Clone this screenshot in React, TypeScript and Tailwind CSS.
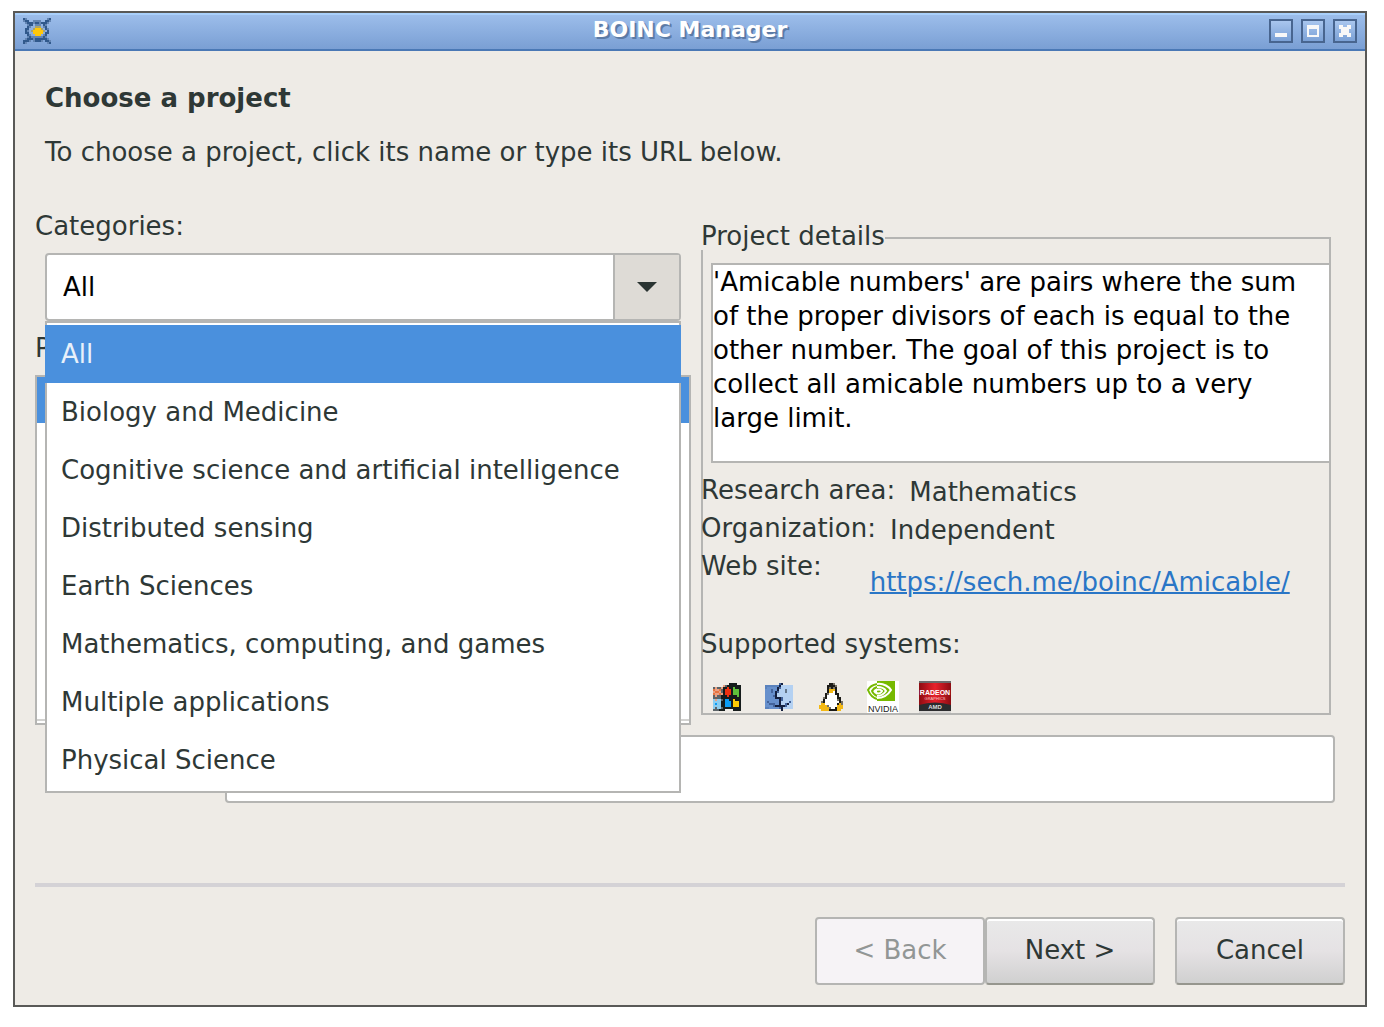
import { useState } from "react";

const CATEGORIES = [
  "All",
  "Biology and Medicine",
  "Cognitive science and artificial intelligence",
  "Distributed sensing",
  "Earth Sciences",
  "Mathematics, computing, and games",
  "Multiple applications",
  "Physical Science",
];

const DESCRIPTION =
  "'Amicable numbers' are pairs where the sum of the proper divisors of each is equal to the other number. The goal of this project is to collect all amicable numbers up to a very large limit.";

type Sprite = { rows: string[]; colors: Record<string, string> };

const BOINC: Sprite = {
  colors: { n: "#31598c", a: "#6486b4", s: "#a9a36b", y: "#ffc70a" },
  rows: [
    "na..........an",
    "ann..aaaa..nna",
    ".annnannannna.",
    "..ann.aaa.na..",
    "..na..sss.an..",
    ".nn..syyys.na.",
    ".na.syyyyys.n.",
    ".nn..yyyyy.nn.",
    "..na..yyy.an..",
    "..anaaaaaana..",
    ".annnannnnnna.",
    "nnna.annna.nna",
    "na..........an",
  ],
};

const WINDOWS: Sprite = {
  colors: { k: "#161c1c", t: "#e9a184", o: "#e8743f", d: "#5c6468", r: "#ee3010", g: "#5fc13a", b: "#0a9cf5", l: "#8ccdf0", y: "#ffcb05" },
  rows: [
    "........kkkk..",
    ".....tdkkkkkkk",
    "dtddtkkrkkgkkk",
    "ottodkrrrkgggk",
    "tootdkrrrkgggk",
    "ottotkrrrkgggk",
    "dtddkkkrkkkkgk",
    "ddddkkkkkkkkkk",
    "ltlldkbbkkykkk",
    "llllkkbbbkyyyk",
    "lbllkkbbbkyyyk",
    "llllkkbbbkyyyk",
    "ldlldkkkkkkkkk",
    "dddkkk....kkkk",
  ],
};

const MAC: Sprite = {
  colors: { B: "#6790cc", b: "#5a82bd", k: "#14203f", n: "#43639b", L: "#b4d1f2", d: "#63768a" },
  rows: [
    ".......nk.....",
    "bbbbbbbkLLLLLL",
    "bBBBBBknLLLLLL",
    "BBBnBBkLLLdLLL",
    "BBBnBknLLLdLLL",
    "BBBBBkLLLLLLLL",
    "BBBBnkLLLLLLLL",
    "BBBBBkkknLLLLL",
    "BBBBBBBknLLLLL",
    "BnBBBBBkLLLLnL",
    "BBnnnBBkLLnkLL",
    "BBBBnkkkkknLLL",
    "bbBBBBBnkLLLLL",
    "........k.....",
  ],
};

const TUX: Sprite = {
  colors: { k: "#1b1a17", w: "#ffffff", y: "#f3b814", d: "#777266" },
  rows: [
    ".....kkd....",
    "....kkkkd...",
    "....kdkdk...",
    "....kyyyk...",
    "....kyywk...",
    "...kdwwwkk..",
    "...kwwwwwk..",
    "..dkwwwwwkk.",
    "..kwwwwwwdk.",
    ".dkwwwwwwwkd",
    ".yywwwwwwkyd",
    "yyyydwwwwyyy",
    "yyyyydwwkyyy",
    ".yyyykkkkyy.",
  ],
};

function PixelIcon({ sprite, className }: { sprite: Sprite; className: string }) {
  const cols = sprite.rows[0].length;
  return (
    <svg viewBox={`0 0 ${cols} ${sprite.rows.length}`} className={className} shapeRendering="crispEdges" aria-hidden="true">
      {sprite.rows.map((row, y) =>
        row.split("").map((c, x) =>
          c === "." ? null : <rect key={`${x}-${y}`} x={x} y={y} width="1" height="1" fill={sprite.colors[c]} />
        )
      )}
    </svg>
  );
}

function NvidiaIcon() {
  return (
    <svg viewBox="0 0 32 32" className="size-8" aria-hidden="true">
      <rect width="32" height="32" fill="#fff" />
      <path d="M10 0h18v20H10z" fill="#76b900" />
      <g fill="none" strokeWidth="2">
        <path d="M10 3C5 4 2 7 1 9c2 5 5 8 9 9" stroke="#76b900" />
        <path d="M10 3c7-1 12 3 14 6-3 5-8 8-14 8" stroke="#fff" />
        <path d="M10 6c-3 1-4 2-5 4 1 3 3 4 5 5" stroke="#76b900" />
        <path d="M10 6c5 0 8 2 9 4-2 3-5 5-9 5" stroke="#fff" />
        <path d="M10 9c2-1 4 0 5 1-1 2-3 3-5 2" stroke="#fff" />
      </g>
      <text x="16" y="31" fontFamily="Liberation Sans" fontSize="9" fill="#222" textAnchor="middle">NVIDIA</text>
    </svg>
  );
}

function RadeonIcon() {
  return (
    <svg viewBox="0 0 32 32" className="size-8" aria-hidden="true">
      <defs>
        <linearGradient id="radeon" x1="0" x2="1" y1="0" y2="0">
          <stop offset="0" stopColor="#8d0c12" />
          <stop offset="0.5" stopColor="#e8212b" />
          <stop offset="1" stopColor="#8d0c12" />
        </linearGradient>
      </defs>
      <rect width="32" height="32" fill="#d9d7d5" />
      <rect width="32" height="2" fill="#6d6a6a" />
      <rect y="2" width="32" height="22" fill="url(#radeon)" />
      <path d="M0 24q16-5 32 0v6H0z" fill="#2b2b2d" />
      <text x="16" y="14" fontFamily="Liberation Sans" fontSize="7" fontWeight="bold" fill="#fff" textAnchor="middle">RADEON</text>
      <text x="16" y="19" fontFamily="Liberation Sans" fontSize="4" fill="#f6c4c4" textAnchor="middle">GRAPHICS</text>
      <text x="16" y="28" fontFamily="Liberation Sans" fontSize="6" fontWeight="bold" fill="#ddd" textAnchor="middle">AMD</text>
    </svg>
  );
}

const titleButton =
  "size-6 border-2 border-[#48658f] bg-linear-to-b from-[#a9c6ee] to-[#7ba1d6] flex items-center justify-center";

function TitleBar() {
  return (
    <header className="grid h-[38px] grid-cols-[1fr_auto_1fr] items-center border-t-2 border-b-2 border-t-[#a9d0fb] border-b-[#4a78b5] bg-linear-to-b from-[#9cbdea] to-[#7a9fd4] px-2 pb-0.5">
      <PixelIcon sprite={BOINC} className="h-[26px] w-7" />
      <h1 className="pb-0.5 text-[22px] leading-7 font-bold text-white [text-shadow:2px_2px_0_#5c7ba6]">BOINC Manager</h1>
      <div className="flex justify-end gap-2">
        <button type="button" aria-label="Minimize" className={titleButton}>
          <svg viewBox="0 0 20 20" className="size-5" fill="#f8f8f8">
            <rect x="4" y="12" width="12" height="4" />
          </svg>
        </button>
        <button type="button" aria-label="Maximize" className={titleButton}>
          <svg viewBox="0 0 20 20" className="size-5" fill="#f8f8f8">
            <path fillRule="evenodd" d="M4 4h12v12H4zM6 8v6h8V8z" />
          </svg>
        </button>
        <button type="button" aria-label="Close" className={titleButton}>
          <svg viewBox="0 0 20 20" className="size-5" fill="#f8f8f8">
            <path d="M4 4h4v2h4V4h4v4h-2v4h2v4h-4v-2H8v2H4v-4h2V8H4z" />
          </svg>
        </button>
      </div>
    </header>
  );
}

function CategorySelect() {
  const [category, setCategory] = useState("All");

  return (
    <div className="relative mx-2.5 mt-[11px]">
      <select
        id="categories"
        value={category}
        onChange={(e) => setCategory(e.target.value)}
        className="block h-[68px] w-full appearance-none rounded border-2 border-[#b5b5b3] bg-white pl-4 text-black outline-none"
      >
        {CATEGORIES.map((c) => (
          <option key={c}>{c}</option>
        ))}
      </select>
      <span className="pointer-events-none absolute inset-y-0.5 right-0.5 flex w-[66px] items-center justify-center border-l-2 border-[#b5b5b3] bg-[#dedbd6]">
        <svg viewBox="0 0 20 10" className="h-2.5 w-5" fill="#2a3432">
          <path d="M0 0h20L10 10z" />
        </svg>
      </span>

      {/* Open list */}
      <ul role="listbox" aria-label="Categories" className="absolute inset-x-0 top-full z-10 border-2 border-[#b5b5b3] bg-white py-0.5">
        {CATEGORIES.map((c) => (
          <li
            key={c}
            role="option"
            aria-selected={c === category}
            onClick={() => setCategory(c)}
            className="-mx-0.5 border-x-2 border-[#b5b5b3] pl-3.5 leading-[58px] whitespace-nowrap aria-selected:border-[#4a90dd] aria-selected:bg-[#4a90dd] aria-selected:text-[#e8f0fa]"
          >
            {c}
          </li>
        ))}
      </ul>
    </div>
  );
}

function ProjectDetails() {
  return (
    <fieldset className="mt-4 min-w-0 self-start border-2 border-[#b5b5b3]">
      <legend className="-ml-0.5 bg-[#eeebe6] pb-1 leading-5">Project details</legend>
      <div className="-ml-0.5">
        <div className="mt-[13px] pl-2.5">
          <textarea
            readOnly
            aria-label="Project description"
            value={DESCRIPTION}
            className="block h-[200px] w-full resize-none overflow-hidden border-2 border-r-0 border-[#b5b5b3] bg-white pr-5 leading-[34px] text-black outline-none"
          />
        </div>
        <dl className="mt-2 leading-[38px]">
          <div className="flex h-[38px] gap-3.5">
            <dt>Research area:</dt>
            <dd className="mt-0.5">Mathematics</dd>
          </div>
          <div className="flex h-[38px] gap-3.5">
            <dt>Organization:</dt>
            <dd className="mt-0.5">Independent</dd>
          </div>
          <div className="flex h-[78px] gap-12">
            <dt>Web site:</dt>
            <dd className="mt-4">
              <a href="https://sech.me/boinc/Amicable/" className="text-[#2a76c6] underline decoration-2">
                https://sech.me/boinc/Amicable/
              </a>
            </dd>
          </div>
          <dt>Supported systems:</dt>
          <dd className="mt-[18px] flex gap-5 pl-2.5">
            <span className="flex size-8 items-center justify-center">
              <PixelIcon sprite={WINDOWS} className="size-7" />
            </span>
            <span className="flex size-8 items-center justify-center">
              <PixelIcon sprite={MAC} className="size-7" />
            </span>
            <span className="flex size-8 items-center justify-center">
              <PixelIcon sprite={TUX} className="h-7 w-6" />
            </span>
            <NvidiaIcon />
            <RadeonIcon />
          </dd>
        </dl>
      </div>
    </fieldset>
  );
}

const wizardButton =
  "h-[68px] w-[170px] rounded border-2 border-[#b5b5b3] border-b-[#96968e] bg-linear-to-b from-[#e9e9e9] via-[#e5e2e4] to-[#d0d0d0] pb-0.5 shadow-[inset_0_2px_0_#fff]";

export default function App() {
  return (
    <div className="min-h-screen bg-white pt-[11px] pr-[17px] pb-5 pl-[13px] font-['DejaVu_Sans',sans-serif] text-[26px] leading-8 text-[#2e3836]">
      <div className="border-2 border-[#595957] bg-[#eeebe6]">
        <TitleBar />

        <main className="px-5 pt-[31px] pb-5">
          <div className="pl-2.5">
            <h2 className="font-bold">Choose a project</h2>
            <p className="mt-[22px]">To choose a project, click its name or type its URL below.</p>
          </div>

          <div className="mt-[42px] grid grid-cols-[656fr_630fr] gap-2.5 pr-3.5">
            <div>
              <label htmlFor="categories" className="block">Categories:</label>
              <CategorySelect />
              <p id="projects" className="mt-[11px]">Projects:</p>
              <div className="mt-[11px] h-[350px] border-2 border-[#b5b5b3] bg-white">
                <ul role="listbox" aria-labelledby="projects" className="h-[344px] border-b-2 border-[#d2d2d0]">
                  <li role="option" aria-selected="true" className="h-[46px] bg-[#4a90dd]" />
                </ul>
              </div>
            </div>
            <ProjectDetails />
          </div>

          {/* Project URL */}
          <div className="mt-2.5 flex pr-2.5 pl-[190px]">
            <input
              type="text"
              aria-label="Project URL"
              className="h-[68px] min-w-0 flex-1 rounded border-2 border-[#b5b5b3] bg-white px-4 outline-none"
            />
          </div>

          <hr className="mt-20 border-t-4 border-[#d4d2d6]" />

          <div className="mt-[30px] flex justify-end">
            <button type="button" disabled className="h-[68px] w-[170px] rounded border-2 border-[#b5b5b3] bg-[#f6f3f6] pb-0.5 text-[#929695]">
              &lt; Back
            </button>
            <button type="button" className={wizardButton}>Next &gt;</button>
            <button type="button" className={`${wizardButton} ml-5`}>Cancel</button>
          </div>
        </main>
      </div>
    </div>
  );
}
